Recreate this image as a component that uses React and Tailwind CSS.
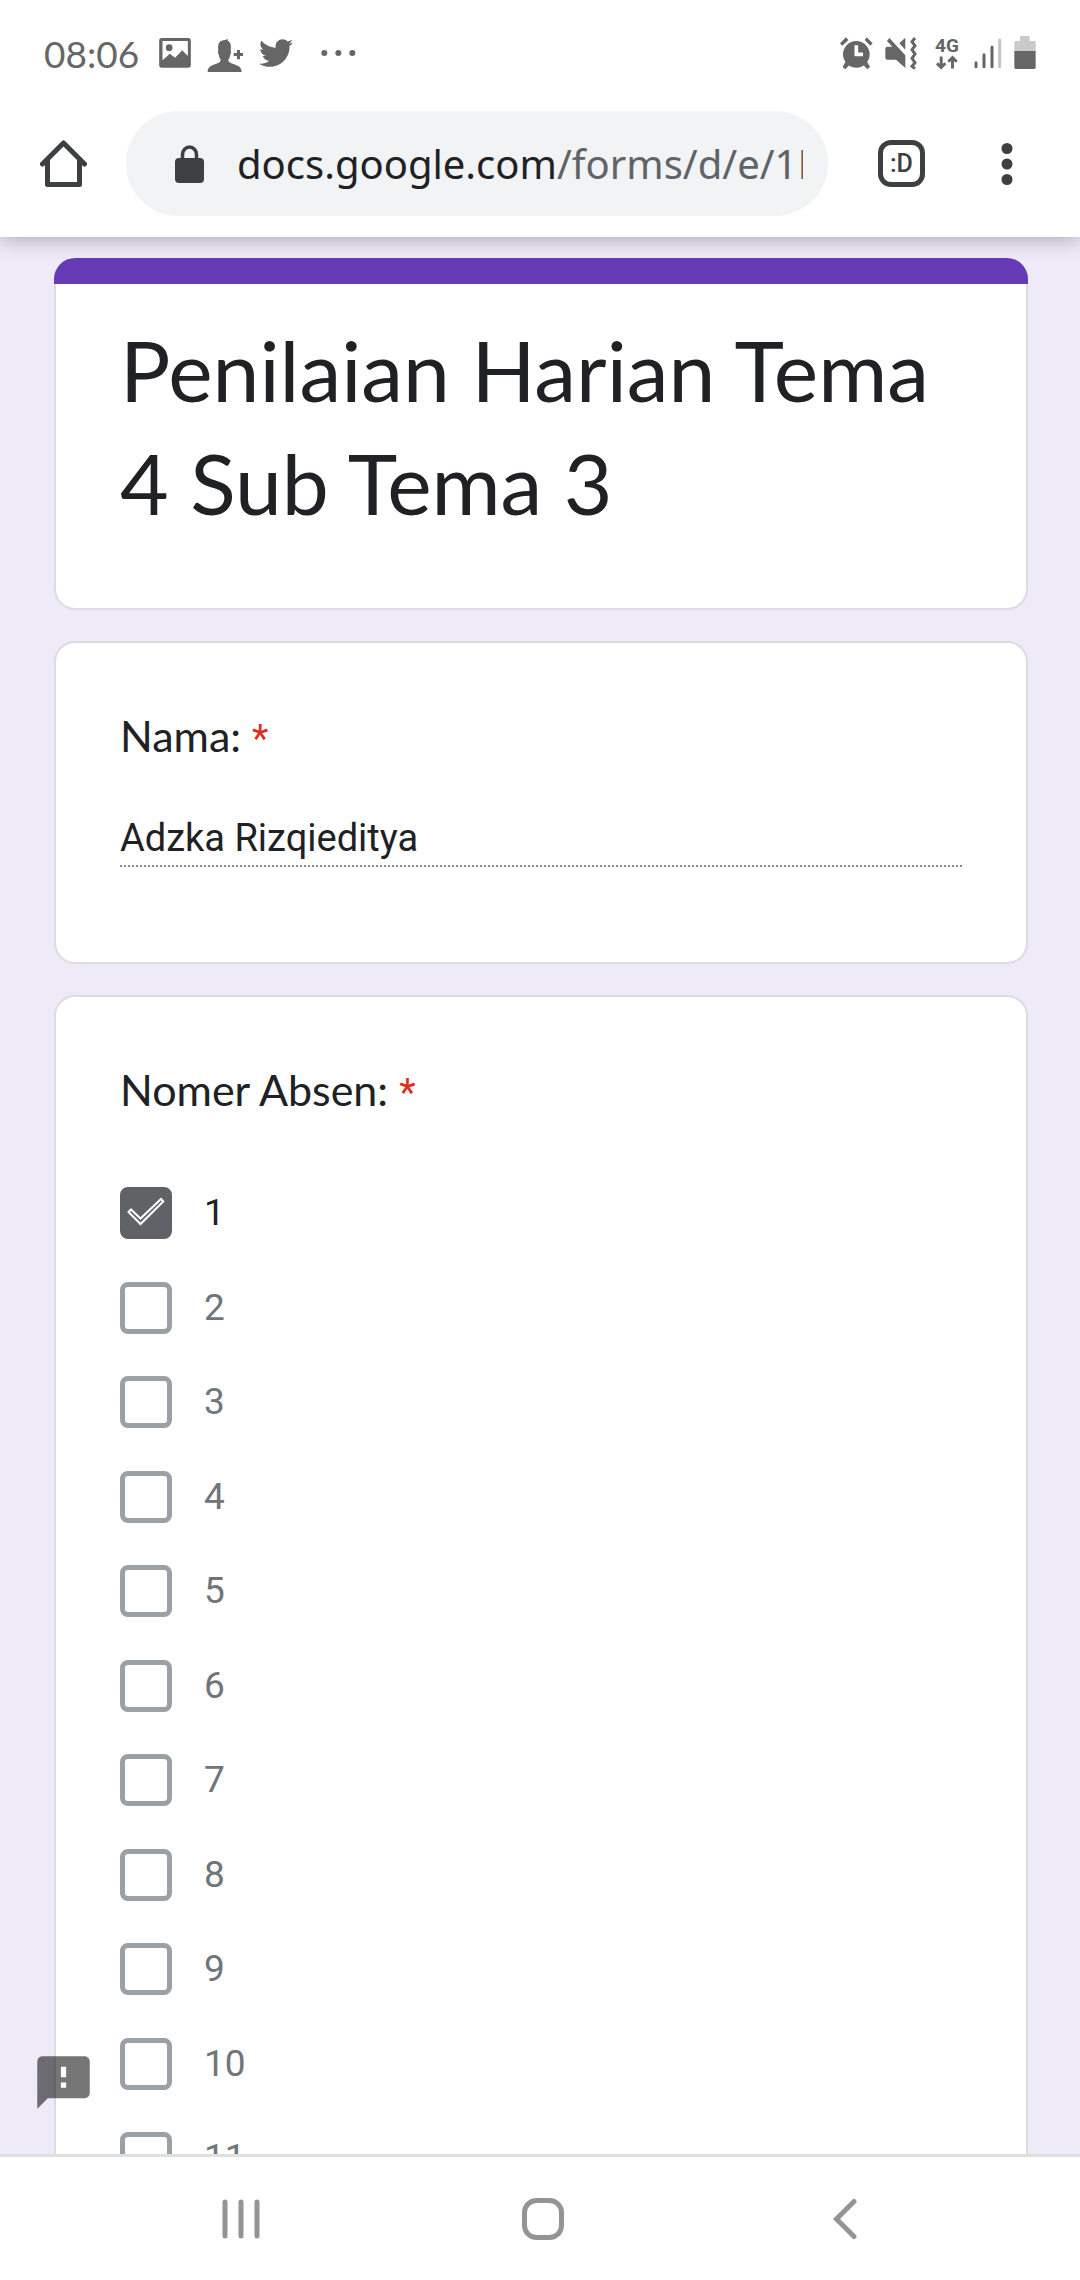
import { FaTwitter } from "react-icons/fa";
import { MdFeedback } from "react-icons/md";

const numbers = ["1", "2", "3", "4", "5", "6", "7", "8", "9", "10", "11"];

function StatusBar() {
  return (
    <div className="flex h-[106px] items-center justify-between pl-11 pr-11 text-[#666666]">
      <div className="flex items-center">
        <time className="mr-5 font-['Lato',sans-serif] text-[37px] leading-none">08:06</time>
        <svg className="mr-4 h-[38px] w-8" viewBox="478 102 95 114" fill="currentColor" aria-hidden="true">
          <path
            fillRule="evenodd"
            d="M486 114h79a8 8 0 0 1 8 8v73a8 8 0 0 1-8 8h-79a8 8 0 0 1-8-8v-73a8 8 0 0 1 8-8zm2 9v58l22-20 16 12 21-22 17 17v-45z"
          />
          <circle cx="508" cy="143" r="10" />
        </svg>
        <svg className="mr-4 h-[38px] w-9" viewBox="622 102 108 114" fill="currentColor" aria-hidden="true">
          <path d="M624 216c0-18 14-20 26-25 8-3 13-5 13-12-3-4-5-9-5-14-3-3-4-10-2-13-3-21 4-30 16-31 4-1 9-3 13-4-1 3-1 4 0 6 8 3 10 14 8 29 2 4 1 10-2 13 0 6-2 11-5 14 0 7 5 9 13 12 12 5 27 7 27 25z" />
          <path d="M712 150h9v9h9v9h-9v10h-9v-10h-10v-9h10z" />
        </svg>
        <FaTwitter className="mr-7 size-[34px]" aria-hidden="true" />
        <svg className="h-[38px] w-[35px]" viewBox="965 102 105 114" fill="currentColor" aria-hidden="true">
          <circle cx="975" cy="159" r="9" />
          <circle cx="1017" cy="159" r="9" />
          <circle cx="1059" cy="159" r="9" />
        </svg>
      </div>
      <div className="flex items-center">
        <svg className="mr-3 h-[38px] w-[33px]" viewBox="182 102 99 114" fill="currentColor" aria-hidden="true">
          <circle cx="231" cy="163" r="40" />
          <path d="m182 130 18-18 7 8-18 17zM262 112l18 18-7 7-17-17zM198 186l12 9-12 13-8-7zM264 186l-12 9 12 13 8-7z" />
          <path d="M231 136v27h20" fill="none" stroke="#fff" strokeWidth="11" />
        </svg>
        <svg className="mr-4 h-[38px] w-[33px]" viewBox="317 102 99 114" fill="currentColor" aria-hidden="true">
          <path d="m330 114 48 52v38l-28-25h-26q-6 0-6-6v-27q0-6 6-6h15l-16-17zM378 113v36l-18-19z" />
          <path
            d="m407 114-9 11 9 12-9 12 9 13-9 13 9 13-9 11 9 7"
            fill="none"
            stroke="currentColor"
            strokeWidth="9"
          />
        </svg>
        <div className="mr-3.5 flex w-[26px] flex-col items-center font-['Roboto',sans-serif] text-[19px] font-bold leading-[18px]">
          <span>4G</span>
          <svg className="h-[15px] w-[22px]" viewBox="469 166 68 45" fill="none" stroke="currentColor" strokeWidth="9" aria-hidden="true">
            <path d="M485 170v36m-13-15 13 13 13-13M520 207v-36m-13 15 13-13 13 13" />
          </svg>
        </div>
        <svg className="mr-3 h-[38px] w-7" viewBox="581 102 84 114" fill="none" stroke="currentColor" strokeWidth="9" strokeLinecap="round" aria-hidden="true">
          <path d="M587 188v12M611 164v36M635 141v59" />
          <path d="M658 120v80" stroke="#c4c4c4" />
        </svg>
        <svg className="h-[38px] w-[22px]" viewBox="704 102 66 114" aria-hidden="true">
          <path d="M722 111q0-3 3-3h23q3 0 3 3v12h14q4 0 4 4v27h-64v-27q0-4 4-4h13z" fill="#cacaca" />
          <path d="M705 153h64v49q0 5-5 5h-54q-5 0-5-5z" fill="currentColor" />
        </svg>
      </div>
    </div>
  );
}

function Toolbar() {
  return (
    <div className="flex items-center pb-[21px] pl-10 pr-[67px] pt-[5px] text-[#3c4043]">
      <button type="button" aria-label="Home" className="mr-[39px]">
        <svg className="size-[47px]" viewBox="0 0 47 47" fill="none" stroke="currentColor" strokeWidth="5" strokeLinejoin="round" strokeLinecap="round">
          <path d="M2.500 24 23.500 3 44.500 24" />
          <path d="M7.500 20v24.500h32V20" />
        </svg>
      </button>
      <button
        type="button"
        aria-label="Address bar"
        className="flex h-[105px] min-w-0 flex-1 items-center rounded-full bg-[#f1f3f4] pl-[49px] pr-[25px] text-left"
      >
        <svg className="mr-[33px] h-[38px] w-[29px] shrink-0" viewBox="0 0 29 38" aria-hidden="true">
          <path d="M7.500 15V9.500a7 7.500 0 0 1 14 0V15" fill="none" stroke="currentColor" strokeWidth="3.500" />
          <rect y="13" width="29" height="25" rx="4" fill="currentColor" />
        </svg>
        <span className="min-w-0 flex-1 overflow-hidden whitespace-nowrap font-['Noto_Sans',sans-serif] text-[40px] leading-[56px] text-[#5f6368]">
          <span className="text-[#202124]">docs.google.com</span>/forms/d/e/1F
        </span>
      </button>
      <button
        type="button"
        aria-label="Tabs"
        className="ml-[50px] flex size-[47px] items-center justify-center rounded-[13px] border-5 border-[#3c4043] font-['Roboto',sans-serif] text-[25px] font-medium leading-none"
      >
        :D
      </button>
      <button type="button" aria-label="More" className="ml-[76px]">
        <svg className="h-[42px] w-3" viewBox="0 0 12 42" fill="currentColor">
          <circle cx="6" cy="5.500" r="5.500" />
          <circle cx="6" cy="21" r="5.500" />
          <circle cx="6" cy="36.500" r="5.500" />
        </svg>
      </button>
    </div>
  );
}

function Required() {
  return <span className="font-['Roboto',sans-serif] text-[38px] leading-none text-[#d93025]">*</span>;
}

function Option({ label, checked }) {
  return (
    <li className="flex items-center even:h-[95px] odd:h-[94px]">
      <label className="flex items-center gap-8">
        <span className="grid shrink-0">
          <input
            type="checkbox"
            defaultChecked={checked}
            className="peer col-start-1 row-start-1 size-[52px] appearance-none rounded-lg border-5 border-[#9aa0a6] checked:border-[#5f6368] checked:bg-[#5f6368]"
          />
          <svg
            className="pointer-events-none invisible col-start-1 row-start-1 size-[52px] peer-checked:visible"
            viewBox="0 0 52 52"
            fill="none"
            stroke="#fff"
            strokeWidth="2"
            aria-hidden="true"
          >
            <path d="m8.500 25 2.500-2.500 9.500 9L41 12l2.300 2.500L20.500 37z" />
          </svg>
        </span>
        <span className={checked ? "text-[#202124]" : "text-[#70757a]"}>{label}</span>
      </label>
    </li>
  );
}

export default function App() {
  return (
    <div className="flex h-screen flex-col bg-[#eeeaf8] font-['Roboto',sans-serif] text-[#202124]">
      <header className="z-10 bg-white shadow-[0_2px_20px_rgba(0,0,0,0.3)]">
        <StatusBar />
        <Toolbar />
      </header>

      <main className="relative min-h-0 flex-1 overflow-hidden">
        <form className="flex flex-col gap-[31px] pl-[54px] pr-[52px] pt-[21px]">
          <section>
            <div className="h-[26px] rounded-t-[21px] bg-[#673ab7]" />
            <h1 className="rounded-b-[21px] border-x-2 border-b-2 border-[#dadce0] bg-white px-16 pb-[69px] pt-[29px] font-['Lato',sans-serif] text-[84px] leading-[113px]">
              Penilaian Harian Tema 4 Sub Tema 3
            </h1>
          </section>

          <section className="rounded-[21px] border-2 border-[#dadce0] bg-white px-16 pb-[95px] pt-[61px]">
            <label htmlFor="nama" className="block font-['Lato',sans-serif] text-[43px] leading-[63px]">
              Nama: <Required />
            </label>
            <input
              id="nama"
              type="text"
              readOnly
              value="Adzka Rizqieditya"
              className="mt-11 block h-14 w-full border-b-2 border-dotted border-[#8a8a8a] text-[38px] outline-none"
            />
          </section>

          <section className="rounded-[21px] border-2 border-[#dadce0] bg-white px-16 pb-[95px] pt-[61px]">
            <fieldset>
              <legend className="font-['Lato',sans-serif] text-[43px] leading-[63px]">
                Nomer Absen: <Required />
              </legend>
              <ul className="mt-[45px] text-[37px] leading-[52px]">
                {numbers.map((n) => (
                  <Option key={n} label={n} checked={n === "1"} />
                ))}
              </ul>
            </fieldset>
          </section>
        </form>

        <button type="button" aria-label="Report a problem" className="absolute bottom-10 left-8 text-black/54">
          <MdFeedback className="size-[63px]" />
        </button>
      </main>

      <nav className="grid grid-cols-3 items-center justify-items-center border-t-3 border-[#dfdfdf] bg-white pb-10 pl-[90px] pr-[84px] pt-[41px] text-[#949494]">
        <button type="button" aria-label="Recent apps">
          <svg className="h-[42px] w-[38px]" viewBox="0 0 38 42" fill="none" stroke="currentColor" strokeWidth="5" strokeLinecap="round">
            <path d="M3 4v34M19 4v34M35 4v34" />
          </svg>
        </button>
        <button type="button" aria-label="Home screen">
          <svg className="size-[42px]" viewBox="0 0 42 42" fill="none" stroke="currentColor" strokeWidth="5">
            <rect x="2.500" y="2.500" width="37" height="37" rx="12" />
          </svg>
        </button>
        <button type="button" aria-label="Back">
          <svg className="h-[42px] w-6" viewBox="0 0 24 42" fill="none" stroke="currentColor" strokeWidth="5" strokeLinecap="round">
            <path d="M21 3.500 3.500 21 21 38.500" />
          </svg>
        </button>
      </nav>
    </div>
  );
}
